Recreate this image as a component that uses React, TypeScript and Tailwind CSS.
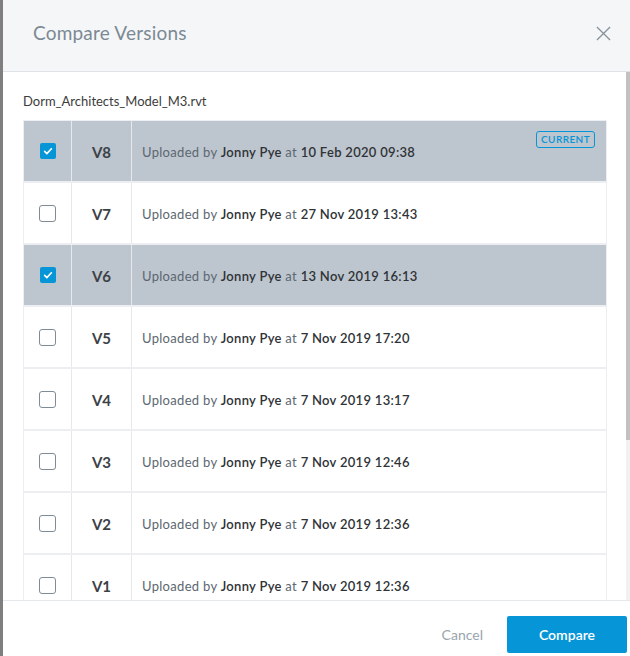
import React from 'react';

interface Version {
  id: string;
  date: string;
  checked: boolean;
  current?: boolean;
}

const versions: Version[] = [
  { id: 'V8', date: '10 Feb 2020 09:38', checked: true, current: true },
  { id: 'V7', date: '27 Nov 2019 13:43', checked: false },
  { id: 'V6', date: '13 Nov 2019 16:13', checked: true },
  { id: 'V5', date: '7 Nov 2019 17:20', checked: false },
  { id: 'V4', date: '7 Nov 2019 13:17', checked: false },
  { id: 'V3', date: '7 Nov 2019 12:46', checked: false },
  { id: 'V2', date: '7 Nov 2019 12:36', checked: false },
  { id: 'V1', date: '7 Nov 2019 12:36', checked: false },
];

const Checkbox: React.FC<{ checked: boolean }> = ({ checked }) =>
  checked ? (
    <span className="flex h-4 w-4 items-center justify-center rounded-[2px] bg-[#0696d7]">
      <svg viewBox="0 0 16 16" className="h-3 w-3" fill="none" stroke="white" strokeWidth="2.2" strokeLinecap="round" strokeLinejoin="round">
        <path d="M3.5 8.5l3 3 6-6.5" />
      </svg>
    </span>
  ) : (
    <span className="block h-[17px] w-[17px] rounded-[3px] border border-[#7f8c97] bg-white" />
  );

const Row: React.FC<{ v: Version }> = ({ v }) => (
  <div className={`flex h-[62px] border-b-2 border-[#eceef1] ${v.checked ? 'bg-[#bdc5ce]' : 'bg-white'}`}>
    <div className="flex w-[48px] items-center justify-center border-r border-[#e6e9ec]">
      <Checkbox checked={v.checked} />
    </div>
    <div className="flex w-[60px] items-center justify-center border-r border-[#e6e9ec] pt-[2px] text-[15px] font-bold text-[#3c4146]">
      {v.id}
    </div>
    <div className="relative flex flex-1 items-center pl-[10px] pt-[3px] text-[13px] tracking-[0.3px] text-[#5c6770]">
      <span>
        Uploaded by <span className="font-semibold text-[#2f3337]">Jonny Pye</span> at{' '}
        <span className="font-semibold text-[#2f3337]">{v.date}</span>
      </span>
      {v.current && (
        <span className="absolute right-[11px] top-[10px] flex h-[17px] items-center rounded-[3px] border border-[#0696d7] px-[4px] text-[10px] font-semibold tracking-[0.4px] text-[#0696d7]">
          CURRENT
        </span>
      )}
    </div>
  </div>
);

export default function App() {
  return (
    <div className="flex h-[656px] w-[630px] overflow-hidden bg-white" style={{ fontFamily: 'Lato, "Noto Sans", sans-serif' }}>
      <div className="w-[3px] bg-[#7f7f7f]" />
      <div className="flex flex-1 flex-col">
        <header className="flex h-[72px] shrink-0 items-center justify-between border-b border-[#dfe3e7] bg-[#f5f6f8] pb-[4px] pl-[30px] pr-[19px]">
          <h1 className="text-[19px] tracking-[0.2px] text-[#7b8994]">Compare Versions</h1>
          <svg viewBox="0 0 16 16" className="h-[15px] w-[15px]" fill="none" stroke="#86929c" strokeWidth="1.4">
            <path d="M1 1l14 14M15 1L1 15" />
          </svg>
        </header>
        <div className="flex min-h-0 flex-1">
          <div className="flex-1 overflow-hidden pl-[20px] pr-[19px] pt-[19px]">
            <div className="mb-[9px] h-5 text-[13px] leading-5 text-[#3c3c3c]">Dorm_Architects_Model_M3.rvt</div>
            <div className="border-x border-t border-[#eceef1]">
              {versions.map((v) => (
                <Row key={v.id} v={v} />
              ))}
            </div>
          </div>
          <div className="w-[4px] bg-[#f1f1f1]">
            <div className="h-[368px] w-full bg-[#c1c1c1]" />
          </div>
        </div>
        <footer className="flex h-[56px] shrink-0 items-center justify-end gap-[24px] border-t border-[#e6e9ec] bg-white pr-[3px] pt-[12px]">
          <button className="text-[14px] text-[#9aa5ae]">Cancel</button>
          <button className="h-[37px] w-[120px] rounded-[2px] bg-[#0696d7] text-[14px] font-semibold text-white">Compare</button>
        </footer>
      </div>
    </div>
  );
}
